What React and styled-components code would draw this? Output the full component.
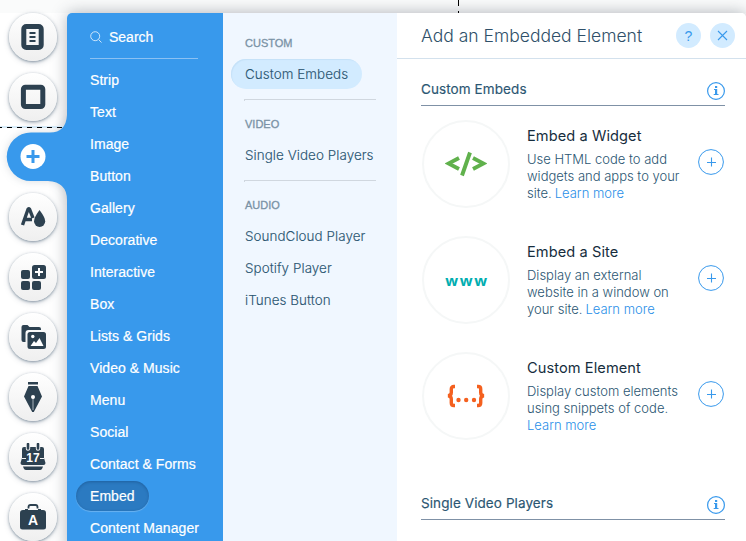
import React from "react";
import styled, { createGlobalStyle } from "styled-components";

const GlobalStyle = createGlobalStyle`
  *, *::before, *::after { box-sizing: border-box; }
  body { margin: 0; overflow: hidden; background: #fff; font-family: "Liberation Sans", Arial, sans-serif; }
`;

const Editor = styled.div`
  position: relative;
  display: flex;
  width: 746px;
  height: 541px;
  overflow: hidden;
  background: #fff;
`;

const TopShade = styled.div`
  position: absolute;
  inset: 0 0 auto 0;
  height: 13px;
  background: #fafbfb;
`;

const GuideVertical = styled.div`
  position: absolute;
  left: 458px;
  top: 0;
  width: 1px;
  height: 13px;
  z-index: 2;
  background: linear-gradient(#000 0 6px, transparent 6px 11px, #000 11px);
`;

const GuideHorizontal = styled.div`
  position: absolute;
  left: 0;
  top: 126px;
  width: 64px;
  height: 2px;
  z-index: 1;
  background: repeating-linear-gradient(90deg, #000 0 5px, transparent 5px 10px) -3px 1px / 80px 1px no-repeat, #d9edfa;
`;

const Rail = styled.nav`
  position: relative;
  z-index: 2;
  flex: none;
  width: 67px;
  padding: 13px 0 0 9px;
  display: flex;
  flex-direction: column;
  gap: 12px;
`;

const RailButton = styled.button`
  flex: none;
  display: grid;
  place-items: center;
  width: 48px;
  height: 48px;
  padding: 0;
  border: 0;
  border-radius: 50%;
  color: #2d4150;
  background: ${(p) => (p.$active ? "transparent" : "linear-gradient(#ffffff, #efefef)")};
  box-shadow: ${(p) =>
    p.$active ? "none" : "0 1px 3px rgba(30, 60, 85, .5), 0 2px 6px rgba(60, 80, 100, .18)"};
  svg { display: block; }
`;

const ActiveTab = styled.svg`
  position: absolute;
  left: 0;
  top: 112px;
  z-index: 1;
  overflow: visible;
  filter: drop-shadow(0 0 4px rgba(60, 80, 100, .2));
  clip-path: inset(-10px 0 -10px 0);
`;

const Panel = styled.div`
  position: relative;
  flex: none;
  display: flex;
  width: 679px;
  height: 540px;
  margin-top: 13px;
  border-radius: 5px 5px 0 0;
  box-shadow: 0 0 16px rgba(50, 60, 75, .38);
`;

const Menu = styled.div`
  flex: none;
  width: 156px;
  padding: 8px 0 0 9px;
  border-radius: 5px 0 0 0;
  background: #3899ec;
  color: #fff;
`;

const Search = styled.div`
  display: flex;
  align-items: center;
  gap: 7px;
  width: 108px;
  height: 38px;
  margin: 0 0 6px 14px;
  padding-bottom: 5px;
  border-bottom: 1px solid #8bc1f3;
  font-size: 14px;
  -webkit-text-stroke: .2px currentColor;
  svg { opacity: .75; }
`;

const MenuItem = styled.div`
  display: flex;
  align-items: center;
  width: max-content;
  height: 30px;
  margin: 1px 0 2px;
  padding: 0 14px 1px 14px;
  border-radius: 15px;
  font-size: 14px;
  letter-spacing: .05px;
  white-space: nowrap;
  -webkit-text-stroke: .2px currentColor;
  background: ${(p) => (p.$active ? "#2b7ac1" : "transparent")};
  box-shadow: ${(p) =>
    p.$active ? "inset 0 1px 3px rgba(15, 60, 110, .4), 0 1px 1px rgba(255, 255, 255, .25)" : "none"};
`;

const SubMenu = styled.div`
  flex: none;
  width: 174px;
  padding: 20px 0 0 8px;
  background: #f0f7ff;
`;

const Group = styled.section`
  & + &::before {
    content: "";
    display: block;
    width: 132px;
    height: 2px;
    margin: 10px 0 13px 13px;
    border-top: 1px solid #d0d7df;
    border-left: 1px solid #d0d7df;
  }
`;

const GroupTitle = styled.h3`
  margin: 0 0 6px;
  padding-left: 14px;
  height: 20px;
  font: 400 11px/20px "Liberation Sans", Arial, sans-serif;
  -webkit-text-stroke: .3px currentColor;
  color: #7a92a5;
`;

const SubItem = styled.div`
  display: flex;
  align-items: center;
  width: max-content;
  height: 30px;
  margin-bottom: 2px;
  padding: 0 14px 0;
  border-radius: 15px;
  font: 300 13.4px Inter, "Liberation Sans", sans-serif;
  letter-spacing: .07px;
  -webkit-text-stroke: .12px currentColor;
  white-space: nowrap;
  color: #2b5672;
  background: ${(p) => (p.$active ? "#d2ebff" : "transparent")};
  box-shadow: ${(p) => (p.$active ? "inset 1px 1px 1px #c5e1f8" : "none")};
`;

const Content = styled.main`
  flex: 1;
  background: #fff;
  border-radius: 0 5px 0 0;
`;

const Header = styled.header`
  display: flex;
  align-items: center;
  height: 46px;
  padding: 0 11px 0 24px;
  border-bottom: 1px solid #d3e1ed;
`;

const Title = styled.h1`
  flex: 1;
  margin: 0;
  font: 300 17.5px Inter, "Liberation Sans", sans-serif;
  color: #2f5069;
`;

const HeaderButton = styled.button`
  display: grid;
  place-items: center;
  width: 25px;
  height: 25px;
  margin-left: 9px;
  padding: 0;
  border: 0;
  border-radius: 50%;
  background: #d2ebff;
  color: #3899ec;
  font: 14px "Liberation Sans", Arial, sans-serif;
`;

const SectionHead = styled.div`
  display: flex;
  align-items: center;
  width: 304px;
  height: 33px;
  margin: ${(p) => (p.$spaced ? "47px" : "14px")} 0 0 24px;
  border-bottom: 1px solid #7f91a6;
`;

const SectionTitle = styled.h2`
  flex: 1;
  margin: 0;
  font: 400 13.5px Inter, "Liberation Sans", sans-serif;
  letter-spacing: .09px;
  -webkit-text-stroke: .15px currentColor;
  color: #2b5672;
`;

const Card = styled.article`
  display: flex;
  width: 304px;
  height: 88px;
  margin: ${(p) => (p.$first ? "14px" : "28px")} 0 0 25px;
`;

const Preview = styled.div`
  flex: none;
  display: grid;
  place-items: center;
  width: 88px;
  height: 88px;
  border: 2px solid #f5f7f7;
  border-radius: 50%;
`;

const CardText = styled.div`
  width: 171px;
  padding: 6px 0 0 17px;
`;

const CardTitle = styled.h3`
  margin: 0 0 5px;
  font: 400 14.6px/20px Inter, "Liberation Sans", sans-serif;
  letter-spacing: .08px;
  color: #162d3d;
`;

const Description = styled.p`
  margin: 0;
  font: 300 13px/17px Inter, "Liberation Sans", sans-serif;
  color: #2b5672;
`;

const Line = styled.span`
  display: flex;
  gap: 3px;
  height: 17px;
  white-space: nowrap;
`;

const Link = styled.a`
  color: #2a8fe8;
`;

const AddButton = styled.button`
  flex: none;
  width: 26px;
  height: 26px;
  margin: 29px 0 0 17px;
  padding: 0;
  border: 0;
  background: none;
`;

const PageIcon = () => (
  <svg width="24" height="26" viewBox="0 0 24 26">
    <rect x="2.800" y="2.500" width="17.400" height="21" rx="2.500" fill="none" stroke="currentColor" strokeWidth="5" />
    <path d="M8.500 9h6M8.500 13h6M8.500 17h6" stroke="currentColor" strokeWidth="2" />
  </svg>
);
const SquareIcon = () => (
  <svg width="26" height="26" viewBox="0 0 26 26">
    <rect x="3.400" y="3.200" width="19.400" height="19.400" rx="2" fill="none" stroke="currentColor" strokeWidth="5" />
  </svg>
);
const PlusIcon = () => (
  <svg width="26" height="26" viewBox="0 0 26 26">
    <circle cx="13" cy="12.500" r="12.500" fill="#fff" />
    <path d="M13 6v13M6.500 12.500h13" stroke="#3899ec" strokeWidth="3" />
  </svg>
);
const DesignIcon = () => (
  <svg width="26" height="22" viewBox="0 0 26 22">
    <path d="M2.500 19 8 3.300Q8.600 2 9.600 3.300L13 12M5 13.500h7" fill="none" stroke="currentColor" strokeWidth="3.400" />
    <path d="M19.500 4Q14 11.500 14 15.300a5.600 5.600 0 0 0 11.200 0Q25.200 11.500 19.500 4Z" fill="currentColor" />
  </svg>
);
const AppsIcon = () => (
  <svg width="26" height="26" viewBox="0 0 26 26">
    <g fill="currentColor">
      <rect x="1" y="6" width="9" height="9" rx="2" />
      <rect x="12" y="1" width="14" height="14" rx="2.500" />
      <rect x="1" y="17" width="9" height="9" rx="2" />
      <rect x="12" y="17" width="9" height="9" rx="2" />
    </g>
    <path d="M19 4v8M15 8h8" stroke="#fff" strokeWidth="2" />
  </svg>
);
const MediaIcon = () => (
  <svg width="26" height="26" viewBox="0 0 26 26">
    <path d="M1.500 3q0-2 2-2h4l2 2H19q2 0 2 2v1H8.500q-3 0-3 3v9h-2q-2 0-2-2Z" fill="currentColor" />
    <rect x="7.500" y="8" width="18.500" height="17" rx="2.500" fill="currentColor" />
    <circle cx="12.800" cy="12.500" r="1.700" fill="#fff" />
    <path d="m10.500 22 3.500-5 2 2 3.500-5 4 8Z" fill="#fff" />
  </svg>
);
const PenIcon = () => (
  <svg width="20" height="30" viewBox="0 0 20 30">
    <path d="M5 0h10v2.500H5ZM5.500 4h9l4.500 10.500L10.800 30H9.200L1 14.500Z" fill="currentColor" />
    <path d="M10 15v13" stroke="#a9b3ba" strokeWidth="1" />
    <circle cx="10" cy="15" r="2" fill="#fff" />
  </svg>
);
const CalendarIcon = () => (
  <svg width="26" height="28" viewBox="0 0 26 28">
    <path d="M2 6q0-2 2-2h18q2 0 2 2v9l1.500 5q0 2-2 2h-21q-2 0-2-2L2 15Z" fill="currentColor" />
    <path d="M3 23.500h20q-1 3.500-3 3.500H6q-2 0-3-3.500Z" fill="currentColor" />
    <path d="M8 1v4.500M18 1v4.500" stroke="#f9f9f9" strokeWidth="4.400" strokeLinecap="round" />
    <path d="M8 1v4.500M18 1v4.500" stroke="currentColor" strokeWidth="2.600" strokeLinecap="round" />
    <path d="M2 15.500h4M20 15.500h4" stroke="#f3f3f3" strokeWidth="1" />
    <text x="13" y="19" textAnchor="middle" fontFamily="Liberation Sans" fontSize="12" fontWeight="700" fill="#fff">17</text>
  </svg>
);
const BagIcon = () => (
  <svg width="26" height="26" viewBox="0 0 26 26">
    <path d="M8.500 4.500V3q0-2 2-2h5q2 0 2 2v1.500" fill="none" stroke="currentColor" strokeWidth="1.800" />
    <path d="M0 9q0-3 3-3h2V5h3v1h10V5h3v1h2q3 0 3 3v14q0 2.500-2.500 2.500h-21Q0 25.500 0 23Z" fill="currentColor" />
    <text x="13" y="21" textAnchor="middle" fontFamily="Liberation Sans" fontSize="14" fontWeight="700" fill="#fff">A</text>
  </svg>
);

const CodeGlyph = () => (
  <svg width="42" height="26" viewBox="0 0 42 26" fill="none" stroke="#60b14c" strokeWidth="3.900">
    <path d="m14 7-10.500 5.500L14 18M28 7l10.500 5.500L28 18M25 1.500 17 24.500" />
  </svg>
);
const WebLabel = styled.span`
  margin-right: -2px;
  font: 700 15px/22px "Open Sans", sans-serif;
  letter-spacing: 1.7px;
  color: #00adb0;
`;
const BracesGlyph = () => (
  <svg width="40" height="24" viewBox="0 0 40 24">
    <path
      d="M9 2.500H7.800Q5.300 2.500 5.300 5v3.500q0 3-3.300 3.300 3.300.3 3.300 3.300V19q0 2.500 2.500 2.500H9M31 2.500h1.200q2.500 0 2.500 2.500v3.500q0 3 3.300 3.300-3.300.3-3.300 3.300V19q0 2.500-2.500 2.500H31"
      fill="none" stroke="#f4601f" strokeWidth="3.400"
    />
    <g fill="#f4601f">
      <circle cx="12.500" cy="16" r="2.200" />
      <circle cx="20.200" cy="16" r="2.200" />
      <circle cx="28" cy="16" r="2.200" />
    </g>
  </svg>
);

const InfoIcon = () => (
  <svg width="18" height="22" viewBox="0 0 18 22">
    <circle cx="9" cy="13" r="8.400" fill="none" stroke="#3899ec" strokeWidth="1.200" />
    <path d="M8 8h2.200v2H8ZM7 11h3.200v5h1.300v1H6.700v-1H8v-4H7Z" fill="#3899ec" />
  </svg>
);
const AddIcon = () => (
  <svg width="26" height="26" viewBox="0 0 26 26" fill="none" stroke="#3899ec" display="block">
    <circle cx="13" cy="13" r="12.400" />
    <path d="M13.500 8.500v9M9 13.500h9" strokeWidth="1.100" />
  </svg>
);

const railIcons = [PageIcon, SquareIcon, PlusIcon, DesignIcon, AppsIcon, MediaIcon, PenIcon, CalendarIcon, BagIcon];

const menuItems = [
  "Strip", "Text", "Image", "Button", "Gallery", "Decorative", "Interactive", "Box",
  "Lists & Grids", "Video & Music", "Menu", "Social", "Contact & Forms", "Embed", "Content Manager",
];

const groups = [
  { title: "CUSTOM", items: ["Custom Embeds"] },
  { title: "VIDEO", items: ["Single Video Players"] },
  { title: "AUDIO", items: ["SoundCloud Player", "Spotify Player", "iTunes Button"] },
];

const cards = [
  { title: "Embed a Widget", lines: ["Use HTML code to add", "widgets and apps to your"], tail: "site.", art: <CodeGlyph /> },
  { title: "Embed a Site", lines: ["Display an external", "website in a window on"], tail: "your site.", art: <WebLabel>www</WebLabel> },
  { title: "Custom Element", lines: ["Display custom elements", "using snippets of code."], art: <BracesGlyph /> },
];

const Section = ({ title, spaced }) => (
  <SectionHead $spaced={spaced}>
    <SectionTitle>{title}</SectionTitle>
    <InfoIcon />
  </SectionHead>
);

export default function App() {
  return (
    <Editor>
      <GlobalStyle />
      <TopShade />
      <GuideVertical />
      <GuideHorizontal />
      <ActiveTab width="68" height="90" viewBox="0 0 68 90">
        <path d="M68 3H67Q66 20.500 50 20.500H31a24 24 0 0 0 0 48.500H48Q67 70 67 88h1Z" fill="#3899ec" />
      </ActiveTab>
      <Rail>
        {railIcons.map((Icon, i) => (
          <RailButton key={i} $active={i === 2}>
            <Icon />
          </RailButton>
        ))}
      </Rail>
      <Panel>
        <Menu>
          <Search>
            <svg width="12" height="12" viewBox="0 0 12 12" fill="none" stroke="#fff">
              <circle cx="5.200" cy="5.200" r="4.500" />
              <path d="m8.500 8.500 3 3" />
            </svg>
            Search
          </Search>
          {menuItems.map((name) => (
            <MenuItem key={name} $active={name === "Embed"}>{name}</MenuItem>
          ))}
        </Menu>
        <SubMenu>
          {groups.map((g) => (
            <Group key={g.title}>
              <GroupTitle>{g.title}</GroupTitle>
              {g.items.map((name) => (
                <SubItem key={name} $active={name === "Custom Embeds"}>{name}</SubItem>
              ))}
            </Group>
          ))}
        </SubMenu>
        <Content>
          <Header>
            <Title>Add an Embedded Element</Title>
            <HeaderButton>?</HeaderButton>
            <HeaderButton>
              <svg width="11" height="11" viewBox="0 0 11 11" stroke="#3899ec" strokeWidth="1.100">
                <path d="m1 1 9 9M10 1l-9 9" />
              </svg>
            </HeaderButton>
          </Header>
          <Section title="Custom Embeds" />
          {cards.map((c, i) => (
            <Card key={c.title} $first={i === 0}>
              <Preview>{c.art}</Preview>
              <CardText>
                <CardTitle>{c.title}</CardTitle>
                <Description>
                  {c.lines.map((line) => <Line key={line}>{line}</Line>)}
                  <Line>
                    {c.tail && <span>{c.tail}</span>}
                    <Link>Learn more</Link>
                  </Line>
                </Description>
              </CardText>
              <AddButton><AddIcon /></AddButton>
            </Card>
          ))}
          <Section title="Single Video Players" spaced />
        </Content>
      </Panel>
    </Editor>
  );
}
